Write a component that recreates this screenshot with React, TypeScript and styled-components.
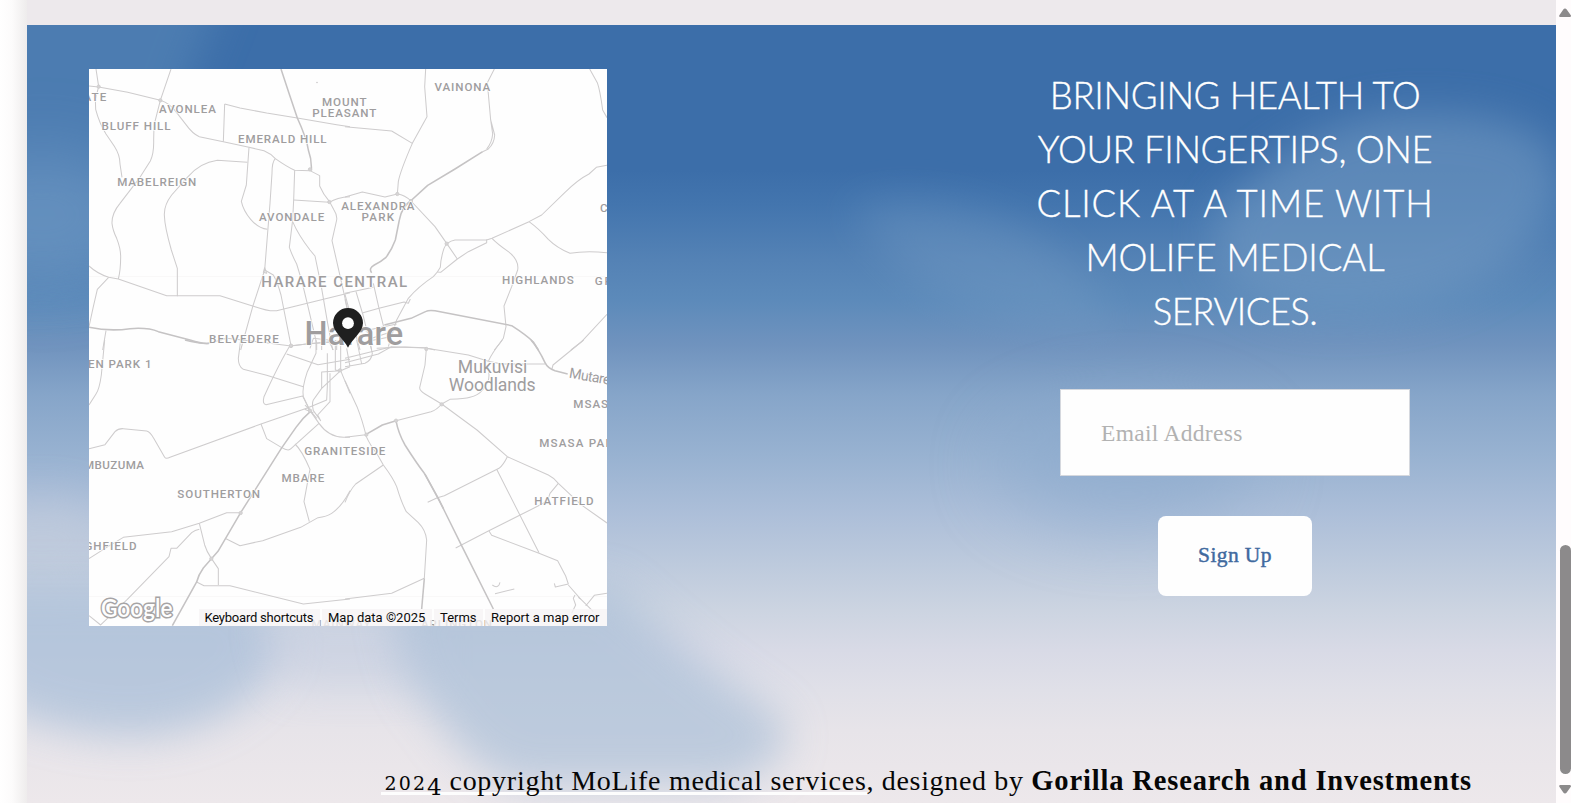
import React from "react";
import styled, { createGlobalStyle } from "styled-components";

const GlobalStyle = createGlobalStyle`
  html, body { margin: 0; padding: 0; overflow: hidden; }
  body { background: #fffcfd; font-family: "Liberation Serif", "Times New Roman", serif; }
  *, *::before, *::after { box-sizing: border-box; }
`;

const Page = styled.div`
  display: flex;
  height: 803px;
  overflow: hidden;
`;

const Gutter = styled.div`
  flex: 0 0 27px;
  background: linear-gradient(90deg, #ffffff 0%, #fcfbfb 45%, #eeecec 100%);
`;

const Main = styled.main`
  flex: 1;
  display: flex;
  flex-direction: column;
  min-width: 0;
`;

const TopStrip = styled.div`
  flex: 0 0 25px;
  background: #ede9ec;
`;

const Section = styled.section`
  position: relative;
  flex: 1;
  display: flex;
  flex-direction: column;
  overflow: hidden;
  background: linear-gradient(
    180deg,
    #3c6ea9 0px, #3c6ea9 145px, #4375ae 180px, #5482b5 235px, #5c8aba 275px,
    #7093be 320px, #86a5c9 370px, #98b2d1 430px, #adbfd9 490px, #bac8dc 530px,
    #ccd4e1 585px, #d8dae6 625px, #e0e0e8 665px, #e7e4e9 705px, #ede8eb 778px
  );
`;

const Sky = styled.svg`
  position: absolute;
  inset: 0;
  width: 100%;
  height: 100%;
`;

const Columns = styled.div`
  position: relative;
  display: flex;
  justify-content: space-between;
  flex: 0 0 734px;
  padding: 44px 105px 0 62px;
`;

const MapFrame = styled.div`
  position: relative;
  width: 518px;
  height: 557px;
  background: #fefefe;
  overflow: hidden;
`;

const MapDrawing = styled.svg`
  display: block;
  font-family: Roboto, sans-serif;
`;

const Attribution = styled.div`
  position: absolute;
  right: 0;
  bottom: 0;
  display: flex;
  gap: 2px;
  height: 17px;
  font: 13px/17px Roboto, sans-serif;
  color: #0b0b0b;
`;

const AttributionItem = styled.span<{ $width: number; $spacing?: number }>`
  width: ${(p) => p.$width}px;
  padding-left: 6px;
  letter-spacing: ${(p) => p.$spacing ?? 0}px;
  white-space: nowrap;
  background: rgba(246, 244, 245, 0.78);
`;

const Newsletter = styled.div`
  display: flex;
  flex-direction: column;
  align-items: center;
  width: 432px;
`;

const Heading = styled.h2`
  margin: -1px 0 0;
  font-family: Lato, sans-serif;
  font-weight: 300;
  font-size: 36.5px;
  line-height: 54px;
  color: #fff;
  text-align: center;
  text-transform: uppercase;
  -webkit-text-stroke: 0.35px #fff;
`;

const HeadingLine = styled.span<{ $spacing: number }>`
  display: block;
  white-space: nowrap;
  letter-spacing: ${(p) => p.$spacing}px;
`;

const EmailInput = styled.input`
  width: 350px;
  height: 87px;
  margin-top: 51px;
  padding: 2px 40px 0;
  border: 1px solid #d5d8de;
  border-radius: 0;
  background: #fefefe;
  font: 23.5px "Liberation Serif", serif;
  letter-spacing: 0.3px;
  outline: none;
  &::placeholder { color: #b2b2b2; opacity: 1; }
`;

const SignUpButton = styled.button`
  width: 154px;
  height: 80px;
  margin-top: 40px;
  padding: 0 0 2px;
  border: 0;
  border-radius: 8px;
  background: #fefefe;
  color: #416a9f;
  font: 21.5px "Liberation Serif", serif;
  letter-spacing: 0.4px;
  -webkit-text-stroke: 0.45px #416a9f;
`;

const Footer = styled.footer`
  position: relative;
  display: flex;
  align-items: baseline;
  padding-left: 353.5px;
  font-size: 28px;
  line-height: 44px;
  color: #060606;
  white-space: pre;
`;

const Underlined = styled.span`
  padding-left: 4px;
  letter-spacing: 0.74px;
  background: linear-gradient(#fdfdfd, #fdfdfd) 0 33px / 100% 3px no-repeat;
`;

const LowDigits = styled.span`
  font-family: "DejaVu Serif", serif;
  font-size: 19px;
  line-height: 1;
  letter-spacing: 2.1px;
`;

const DroppedDigit = styled(LowDigits)`
  font-size: 23px;
  letter-spacing: 0;
  vertical-align: -5px;
`;

const Designed = styled.span`
  letter-spacing: 0.66px;
`;

const Company = styled.strong`
  font-size: 28.5px;
  letter-spacing: 0.85px;
`;

const Scrollbar = styled.aside`
  flex: 0 0 15px;
  display: flex;
  flex-direction: column;
  align-items: flex-end;
  padding-top: 8px;
  background: #fffcfd;
`;

const Arrow = styled.svg`
  display: block;
  width: 12px;
  height: 9px;
  fill: #8c8a8b;
`;

const Thumb = styled.div`
  width: 11px;
  height: 229px;
  margin: 528px 0 11px;
  border-radius: 5.5px;
  background: #8c8a8b;
`;

type Label = {
  text: string;
  x: number;
  y: number;
  width?: number;
  size?: number;
  weight?: number;
  rotate?: number;
  color?: string;
};

const labels: Label[] = [
  { text: "ATE", x: 83.5, y: 100.7, width: 22.8 },
  { text: "AVONLEA", x: 159, y: 112.6, width: 57 },
  { text: "BLUFF HILL", x: 101.4, y: 129.6, width: 69.2 },
  { text: "EMERALD HILL", x: 238, y: 143.1, width: 88.6 },
  { text: "MABELREIGN", x: 117.2, y: 186.3, width: 79 },
  { text: "AVONDALE", x: 259, y: 221.3, width: 65.2 },
  { text: "HARARE CENTRAL", x: 261.2, y: 286.6, width: 146, size: 15 },
  { text: "BELVEDERE", x: 209, y: 343.3, width: 69.8 },
  { text: "MOUNT", x: 322, y: 105.6, width: 44.6 },
  { text: "PLEASANT", x: 312.2, y: 117, width: 64.2 },
  { text: "VAINONA", x: 434.5, y: 91.4, width: 55.8 },
  { text: "ALEXANDRA", x: 341.3, y: 210.1, width: 73.2 },
  { text: "PARK", x: 361.5, y: 221.3, width: 32.7 },
  { text: "HIGHLANDS", x: 502, y: 284, width: 71.8 },
  { text: "GREENDALE", x: 594.8, y: 284.7, width: 78 },
  { text: "CHISIPITE", x: 600, y: 211.7, width: 66 },
  { text: "EN PARK 1", x: 88, y: 368, width: 63.5 },
  { text: "MBUZUMA", x: 84, y: 468.8, width: 60 },
  { text: "GRANITESIDE", x: 304.2, y: 454.9, width: 81.2 },
  { text: "MBARE", x: 281.5, y: 482.4, width: 42.7 },
  { text: "SOUTHERTON", x: 177.3, y: 497.6, width: 82.8 },
  { text: "GHFIELD", x: 84.5, y: 549.6, width: 52 },
  { text: "MSASA", x: 573.3, y: 408.3, width: 43.5 },
  { text: "MSASA PARK", x: 539.2, y: 446.9, width: 82 },
  { text: "HATFIELD", x: 534.2, y: 505.2, width: 59.5 },
  { text: "MAINWAY", x: 311.5, y: 628, width: 59, color: "#aeacad" },
  { text: "ARLINGTON", x: 421, y: 628, width: 71, color: "#a3a1a2" },
  { text: "Mukuvisi", x: 457.8, y: 372.9, width: 69.6, size: 17.6, weight: 400 },
  { text: "Woodlands", x: 448.8, y: 390.5, width: 86.9, size: 17.6, weight: 400 },
  { text: "Mutare Rd", x: 568.6, y: 377.6, width: 60, size: 14.2, weight: 400, rotate: 10 },
  { text: "Harare", x: 304.6, y: 344.8, width: 98.6, size: 32.5 },
];

/* Road geometry is digitised per quadrant, three units to a pixel. */
const quadrants = [
  {
    transform: "translate(-9 -9) scale(.33333)",
    roads: [
      "M48 27L56 80L46 118L47 148Q58 190 78 222L103 259Q120 285 120 312L126 352",
      "M27 78L56 81L143 97L241 121Q270 130 290 158L318 194Q338 222 358 230L430 245L507 262L552 272Q572 280 586 296Q620 320 644 331L690 332L719 347V378Q730 404 748 424L762 450Q772 465 770 480L756 542L775 625L802 745",
      "M273 27L241 121L222 196L221 240Q222 280 211 303L180 352L120 430Q95 460 96 490Q98 510 110 535Q122 565 122 590Q122 630 115 657",
      "M434 132L430 245M434 132L480 144L560 159L652 174L770 194L810 200",
      "M502 307L412 301Q360 308 322 352L275 405Q252 435 253 465Q254 500 274 570L292 625V709",
      "M507 262L499 375L484 424Q490 452 512 478Q535 505 562 508",
      "M586 296Q576 305 576 340L570 430L560 555L554 630L519 737L482 870",
      "M644 331L641 420L638 480L628 562Q638 590 650 612L666 665L684 740L710 850V870",
      "M641 420L748 427Q770 412 810 410",
      "M638 485Q655 525 690 570L705 588L724 680L743 790L758 870",
      "M554 630L580 645Q592 665 603 705L633 857",
      "M27 618Q50 640 86 652L115 657L260 707H292H420L525 740Q568 755 590 752L700 725L810 698",
      "M86 652L52 688L40 740L27 800M78 812L68 870",
      "M388 850L440 835L540 846L633 858L680 852L810 842",
      "M690 865L700 835L745 840M770 870V850M745 840L760 870M725 870V850",
      "M554 623L550 637L560 640Z",
    ],
    majors: [
      "M603 27L627 100L652 174Q680 235 685 270Q696 300 694 332",
      "M27 802Q90 815 150 806Q205 802 235 815L330 840Q370 853 388 850",
    ],
    junctions: [[56, 80], [241, 121], [633, 858], [690, 328], [748, 426]],
  },
  {
    transform: "translate(256 -9) scale(.33333)",
    roads: [
      "M242 27L239 80L246 170L202 250Q165 335 160 365L157 402",
      "M0 200L140 213L202 250",
      "M0 411L52 396L120 411L157 402Q180 405 198 423L270 500L305 550L337 597",
      "M448 27L427 68L437 180L449 225Q448 250 430 267L413 275M437 180L443 222Q441 248 425 267",
      "M734 27L757 68Q765 90 773 150L786 173",
      "M786 316L754 322L732 342Q700 358 660 397L590 465L552 485L441 535L425 540H330Q305 545 297 565Q287 595 286 622L277 636L287 637L337 597L370 575L425 548V538",
      "M552 485Q580 505 610 538Q635 563 675 580Q720 572 786 578",
      "M441 535Q455 550 490 575Q523 600 518 630L500 680L477 738L483 800L475 835Q463 853 448 870",
      "M277 636L265 650Q220 680 190 715L155 780L150 795L130 860",
      "M85 670L102 745L118 808M33 695L54 765L80 870M0 703L45 870M0 700L85 682M54 758L102 745L177 726L190 730L196 717M0 718L6 745",
      "M786 763L710 845L678 870",
      "M60 812L155 792M80 835L140 815M60 845L130 832",
      "M95 865L180 861L240 863L270 870",
    ],
    majors: [
      "M413 275L330 327L248 376L200 420Q170 440 163 480L151 540Q140 570 123 592Q108 605 88 615Q70 625 80 638",
      "M118 795L198 775L243 754Q250 750 270 752L500 797Q545 826 565 846L580 870",
    ],
    junctions: [[198, 423], [157, 402], [305, 551]],
  },
  {
    transform: "translate(-9 271) scale(.33333)",
    roads: [
      "M74 0L64 105Q58 148 48 162L27 195",
      "M27 326L75 314L105 275Q115 265 130 266L200 273Q210 275 222 296L254 352Q258 358 270 352L543 252L682 204L740 180L742 140V40",
      "M543 252L560 296L604 322Q625 335 633 326L717 250",
      "M633 12Q600 65 552 170Q546 193 558 194L668 168L690 212",
      "M482 0L475 55Q475 80 490 88L560 106L670 140",
      "M620 42L714 74L810 58M633 17L700 10L810 0",
      "M708 0V40L682 95Q665 145 670 170L690 212L717 250Q745 290 790 292H810",
      "M782 92L725 145L700 180Q695 190 700 212L722 242L713 225L750 185V100M782 92L725 96V145M782 0V92M766 0V90L782 92L810 80M782 92L810 160",
      "M645 312Q665 330 690 388L682 430L672 485L688 545",
      "M810 452Q785 500 755 520Q740 530 714 533L662 562L548 602L480 617L438 596",
      "M482 518H440L358 550L275 575L130 592L80 622L27 656",
      "M358 550L374 615Q380 635 394 655L415 686V735M358 568Q345 570 335 578L290 625H273L267 650L142 778L62 855L27 827",
      "M350 726L372 737H450L670 792L810 777",
      "M675 195L690 212M680 200L710 235M674 208L700 218",
    ],
    majors: ["M315 0Q360 12 388 10", "M694 212Q670 232 648 262L604 325L482 518L414 634L370 684Q355 705 350 726L277 857"],
    junctions: [[633, 17], [394, 656], [690, 212], [482, 519], [780, 91]],
  },
  {
    transform: "translate(256 271) scale(.33333)",
    roads: [
      "M244 27L240 75L224 143Q224 152 240 162L290 192L396 270L487 350L610 405Q625 412 640 430L708 494L786 549",
      "M153 242L258 215Q275 210 290 192L315 178Q360 177 375 172Q400 165 410 153Q433 130 432 105L430 85",
      "M0 292L62 284M0 122L36 200Q52 240 64 290Q75 315 98 345L115 375Q145 415 155 440Q170 490 184 515L220 548Q242 570 245 600L238 715",
      "M115 375L32 432Q15 450 0 487",
      "M487 350Q475 375 462 385L298 467L277 473L248 487",
      "M455 388L582 638M640 430L615 460Q610 480 595 490L524 526L430 573L332 624",
      "M432 573L440 586L582 640L638 662L662 708L670 732L631 741L628 730",
      "M238 715L140 760L0 777",
      "M240 24L370 45L430 64L470 72H600M430 64Q440 40 472 0M620 90L624 75L716 0",
      "M0 55L140 20L240 24M0 68L100 42L140 20M0 80L60 70Q80 60 82 40L75 10M35 0L50 72M5 25L15 80",
      "M442 735Q455 745 462 735L465 727M450 761L508 747",
      "M670 735L705 775L745 815M690 765L685 775L692 795L680 820M722 798L748 766L786 760",
      "M700 772L707 777",
    ],
    majors: [
      "M62 284L112 255L153 242Q160 280 180 315Q215 370 238 400L280 475L300 516L348 613L445 807",
      "M238 715L230 807",
      "M558 0Q580 25 600 68Q608 85 630 92L668 102",
      "M240 402L295 505",
    ],
    junctions: [[290, 193], [153, 242], [244, 27], [64, 284]],
  },
];

const Clouds = () => (
  <Sky viewBox="0 0 1529 778" preserveAspectRatio="none" aria-hidden="true">
    <defs>
      <filter id="soft" x="-60%" y="-60%" width="220%" height="220%">
        <feGaussianBlur stdDeviation="21" />
      </filter>
      <filter id="wide" x="-100%" y="-100%" width="300%" height="300%">
        <feGaussianBlur stdDeviation="34" />
      </filter>
    </defs>
    <path d="M-80 -80H215L160 60L110 260L-80 270Z" fill="#5584b6" opacity=".66" filter="url(#soft)" />
    <ellipse cx="15" cy="190" rx="100" ry="65" fill="#769ec7" opacity=".55" filter="url(#wide)" />
    <path d="M1190 190Q1280 84 1400 88Q1560 90 1530 180Q1470 290 1300 290Q1170 280 1190 190Z" fill="#7199c2" opacity=".62" filter="url(#soft)" />
    <path d="M820 185Q900 160 1000 205Q1070 250 1090 310Q960 310 880 250Z" fill="#779dc5" opacity=".36" filter="url(#soft)" />
    <ellipse cx="1100" cy="440" rx="130" ry="62" fill="#88a8cc" opacity=".5" filter="url(#wide)" />
    <ellipse cx="15" cy="515" rx="75" ry="42" fill="#c5cedd" opacity=".6" filter="url(#soft)" />
    <path d="M-60 560H215L258 620Q220 705 110 712Q0 710 -60 656Z" fill="#abc0d9" opacity=".74" filter="url(#soft)" />
    <path d="M240 590H400V660H260Z" fill="#c3cddf" opacity=".5" filter="url(#soft)" />
    <path d="M365 560H585Q660 630 750 690Q785 730 700 760H490Q430 735 410 690Q370 660 365 560Z" fill="#abc0d8" opacity=".7" filter="url(#soft)" />
  </Sky>
);

const HarareMap = () => (
  <MapFrame>
    <MapDrawing width="518" height="557" viewBox="0 0 518 557">
      <path d="M0 207.5H518M0 527.5H518" stroke="#f9f8f8" />
      {quadrants.map((q) => (
        <g key={q.transform} transform={q.transform} fill="none" stroke="#cecccd" strokeWidth="3.1" strokeLinejoin="round">
          {q.roads.map((d) => <path key={d} d={d} />)}
          {q.majors.map((d) => <path key={d} d={d} stroke="#c5c3c4" strokeWidth="4.6" />)}
          {q.junctions.map(([x, y]) => <circle key={`${x}-${y}`} cx={x} cy={y} r="5" fill="#d6d4d5" strokeWidth="2.5" />)}
        </g>
      ))}
      <circle cx="228" cy="13.5" r=".8" fill="#c9c7c8" />
      <g transform="translate(-89 -69)">
        {labels.map((l) => (
          <text
            key={l.text}
            x={l.x}
            y={l.y}
            textLength={l.width}
            fontSize={l.size ?? 11.6}
            fontWeight={l.weight ?? 500}
            fill={l.color ?? "#9f9d9e"}
            stroke="#fefefe"
            strokeWidth="1.4"
            paintOrder="stroke"
            transform={l.rotate ? `rotate(${l.rotate} ${l.x} ${l.y})` : undefined}
          >
            {l.text}
          </text>
        ))}
        <path
          d="M348 347.8C344 339 333 332 333 323A15 15 0 0 1 363 323C363 332 352 339 348 347.8Z"
          fill="#1f1f1f"
        />
        <circle cx="348" cy="323.2" r="5.9" fill="#fefefe" />
        <text
          x="101" y="617" textLength="71.5" lengthAdjust="spacingAndGlyphs" fontSize="24.5" fontWeight="600"
          fontFamily="Lato, sans-serif" fill="#fefefe" stroke="#a6a4a5" strokeWidth="3" paintOrder="stroke"
        >
          Google
        </text>
      </g>
    </MapDrawing>
    <Attribution>
      <AttributionItem $width={121.5} $spacing={-0.22}>Keyboard shortcuts</AttributionItem>
      <AttributionItem $width={110}>Map data ©2025</AttributionItem>
      <AttributionItem $width={49}>Terms</AttributionItem>
      <AttributionItem $width={122}>Report a map error</AttributionItem>
    </Attribution>
  </MapFrame>
);

export default function App() {
  return (
    <>
      <GlobalStyle />
      <Page>
        <Gutter />
        <Main>
          <TopStrip />
          <Section>
            <Clouds />
            <Columns>
              <HarareMap />
              <Newsletter>
                <Heading>
                  <HeadingLine $spacing={-0.33}>Bringing health to </HeadingLine>
                  <HeadingLine $spacing={-0.35}>your fingertips, one </HeadingLine>
                  <HeadingLine $spacing={0.85}>click at a time with </HeadingLine>
                  <HeadingLine $spacing={-0.08}>MoLife medical </HeadingLine>
                  <HeadingLine $spacing={-0.6}>services.</HeadingLine>
                </Heading>
                <EmailInput type="email" placeholder="Email Address" />
                <SignUpButton type="button">Sign Up</SignUpButton>
              </Newsletter>
            </Columns>
            <Footer>
              <Underlined><LowDigits>202</LowDigits><DroppedDigit>4</DroppedDigit> copyright MoLife medical services</Underlined>
              <Designed>, designed by </Designed>
              <Company>Gorilla Research and Investments</Company>
            </Footer>
          </Section>
        </Main>
        <Scrollbar>
          <Arrow viewBox="0 0 12 9">
            <path d="M6 0.5Q7 .5 7.7 1.5L12 7.5Q12 9 11 9H1Q0 9 .2 7.5L4.3 1.5Q5 .5 6 .5Z" />
          </Arrow>
          <Thumb />
          <Arrow viewBox="0 0 12 9">
            <path d="M6 8.5Q7 8.5 7.7 7.5L12 1.5Q12 0 11 0H1Q0 0 .2 1.5L4.3 7.5Q5 8.5 6 8.5Z" />
          </Arrow>
        </Scrollbar>
      </Page>
    </>
  );
}
